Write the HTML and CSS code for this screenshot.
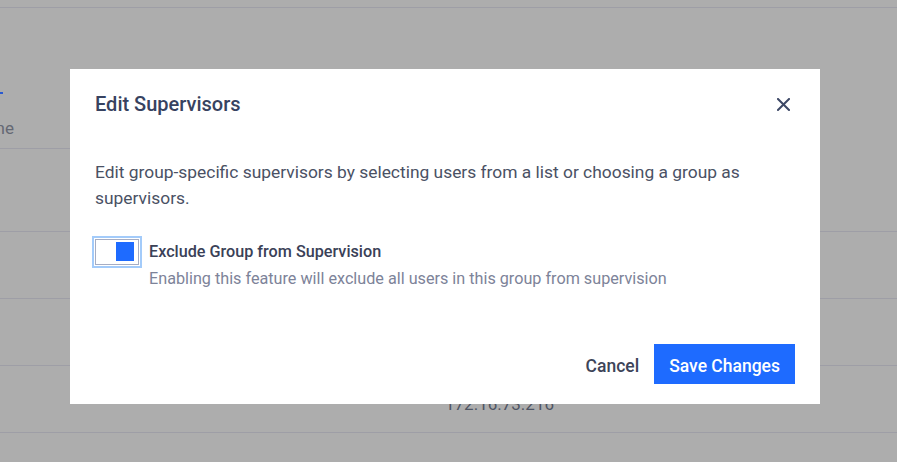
FILE: index.html
```html
<!DOCTYPE html>
<html lang="en">
<head>
<meta charset="utf-8">
<title>Edit Supervisors</title>
<link rel="stylesheet" href="styles.css">
</head>
<body>
<div class="page">
  <div class="topbar"></div>
  <div class="head">
    <div class="tab"><span class="tab-link"></span></div>
    <div class="col-name"><span>Hostname</span></div>
  </div>
  <div class="spacer"></div>
  <div class="row"></div>
  <div class="row"></div>
  <div class="row row-ip"><span class="ip">172.16.73.216</span></div>
  <div class="row"></div>
</div>

<div class="modal" role="dialog" aria-labelledby="modal-title">
  <div class="modal-head">
    <h2 class="modal-title" id="modal-title">Edit Supervisors</h2>
    <button class="close" aria-label="Close">
      <svg width="13" height="13" viewBox="0 0 13 13"><path d="M1 1 L12 12 M12 1 L1 12" stroke="#3d4866" stroke-width="2" stroke-linecap="square"/></svg>
    </button>
  </div>
  <div class="modal-body">
    <p class="desc">Edit group-specific supervisors by selecting users from a list or choosing a group as supervisors.</p>
    <div class="option">
      <div class="toggle"><span class="knob"></span></div>
      <div class="option-text">
        <div class="option-label">Exclude Group from Supervision</div>
        <div class="option-help">Enabling this feature will exclude all users in this group from supervision</div>
      </div>
    </div>
  </div>
  <div class="modal-foot">
    <button class="btn-cancel">Cancel</button>
    <button class="btn-save">Save Changes</button>
  </div>
</div>
</body>
</html>
```

FILE: styles.css
```css
* { box-sizing: border-box; }
html, body { margin: 0; padding: 0; }
body {
  font-family: Roboto, "Liberation Sans", sans-serif;
  background: #adadad;
  width: 897px;
  height: 462px;
  overflow: hidden;
}
.page {
  height: 462px;
  overflow: hidden;
  background: #adadad;
}
.topbar {
  height: 8px;
  border-bottom: 1px solid #9e9ea6;
}
.head {
  width: 420px;
  height: 141px;
  border-bottom: 1px solid #9e9ea6;
  display: flex;
  flex-direction: column;
}
.tab {
  margin-top: 60px;
  margin-left: -60px;
  height: 26px;
}
.tab-link {
  display: inline-block;
  width: 63px;
  height: 26px;
  border-bottom: 2px solid #2a5ad0;
}
.col-name {
  margin-top: 24px;
  width: 14px;
  display: flex;
  justify-content: flex-end;
  white-space: nowrap;
  font-size: 17px;
  line-height: 20px;
  color: #646874;
}
.spacer {
  height: 83px;
  border-bottom: 1px solid #9e9ea6;
}
.row {
  height: 67px;
  border-bottom: 1px solid #9e9ea6;
}
.row-ip {
  display: flex;
  align-items: center;
  padding-left: 445px;
  padding-top: 10px;
}
.ip {
  font-size: 17px;
  color: #4f5564;
}

.modal {
  position: fixed;
  left: 70px;
  top: 69px;
  width: 750px;
  height: 335px;
  background: #fff;
  display: flex;
  flex-direction: column;
  padding: 23px 25px 20px 25px;
}
.modal-head {
  display: flex;
  align-items: center;
  justify-content: space-between;
  height: 24px;
}
.modal-title {
  margin: 0;
  font-size: 20px;
  line-height: 24px;
  font-weight: 500;
  color: #374260;
}
.close {
  width: 24px;
  height: 24px;
  padding: 0;
  border: 0;
  background: none;
  display: flex;
  align-items: center;
  justify-content: center;
  cursor: pointer;
}
.modal-body {
  margin-top: 43px;
}
.desc {
  margin: 0;
  font-size: 17.4px;
  line-height: 26px;
  color: #4a5164;
}
.option {
  display: flex;
  align-items: flex-start;
  gap: 10px;
  margin-top: 28px;
}
.toggle {
  width: 44px;
  height: 26px;
  border: 1px solid #a6adc3;
  background: #fff;
  box-shadow: 0 0 0 1px #fff, 0 0 0 3px #a3cbfa;
  display: flex;
  justify-content: flex-end;
  padding: 2px 4px 2px 0;
  flex-shrink: 0;
}
.knob {
  width: 18px;
  height: 19px;
  background: #1e6bff;
}
.option-text {
  padding-top: 2px;
}
.option-label {
  font-size: 16.2px;
  line-height: 22px;
  font-weight: 500;
  color: #3a4157;
}
.option-help {
  margin-top: 5px;
  font-size: 16.2px;
  line-height: 22px;
  color: #7d8399;
}
.modal-foot {
  margin-top: auto;
  display: flex;
  justify-content: flex-end;
  align-items: center;
  gap: 15px;
}
.btn-cancel {
  border: 0;
  background: none;
  padding: 3px 0 0 0;
  font-family: inherit;
  font-size: 17.5px;
  font-weight: 500;
  color: #3d4458;
  cursor: pointer;
}
.btn-save {
  height: 40px;
  padding: 3px 15px 0 15px;
  border: 0;
  background: #1e6bff;
  color: #fff;
  font-family: inherit;
  font-size: 17.5px;
  font-weight: 500;
  cursor: pointer;
}
```
